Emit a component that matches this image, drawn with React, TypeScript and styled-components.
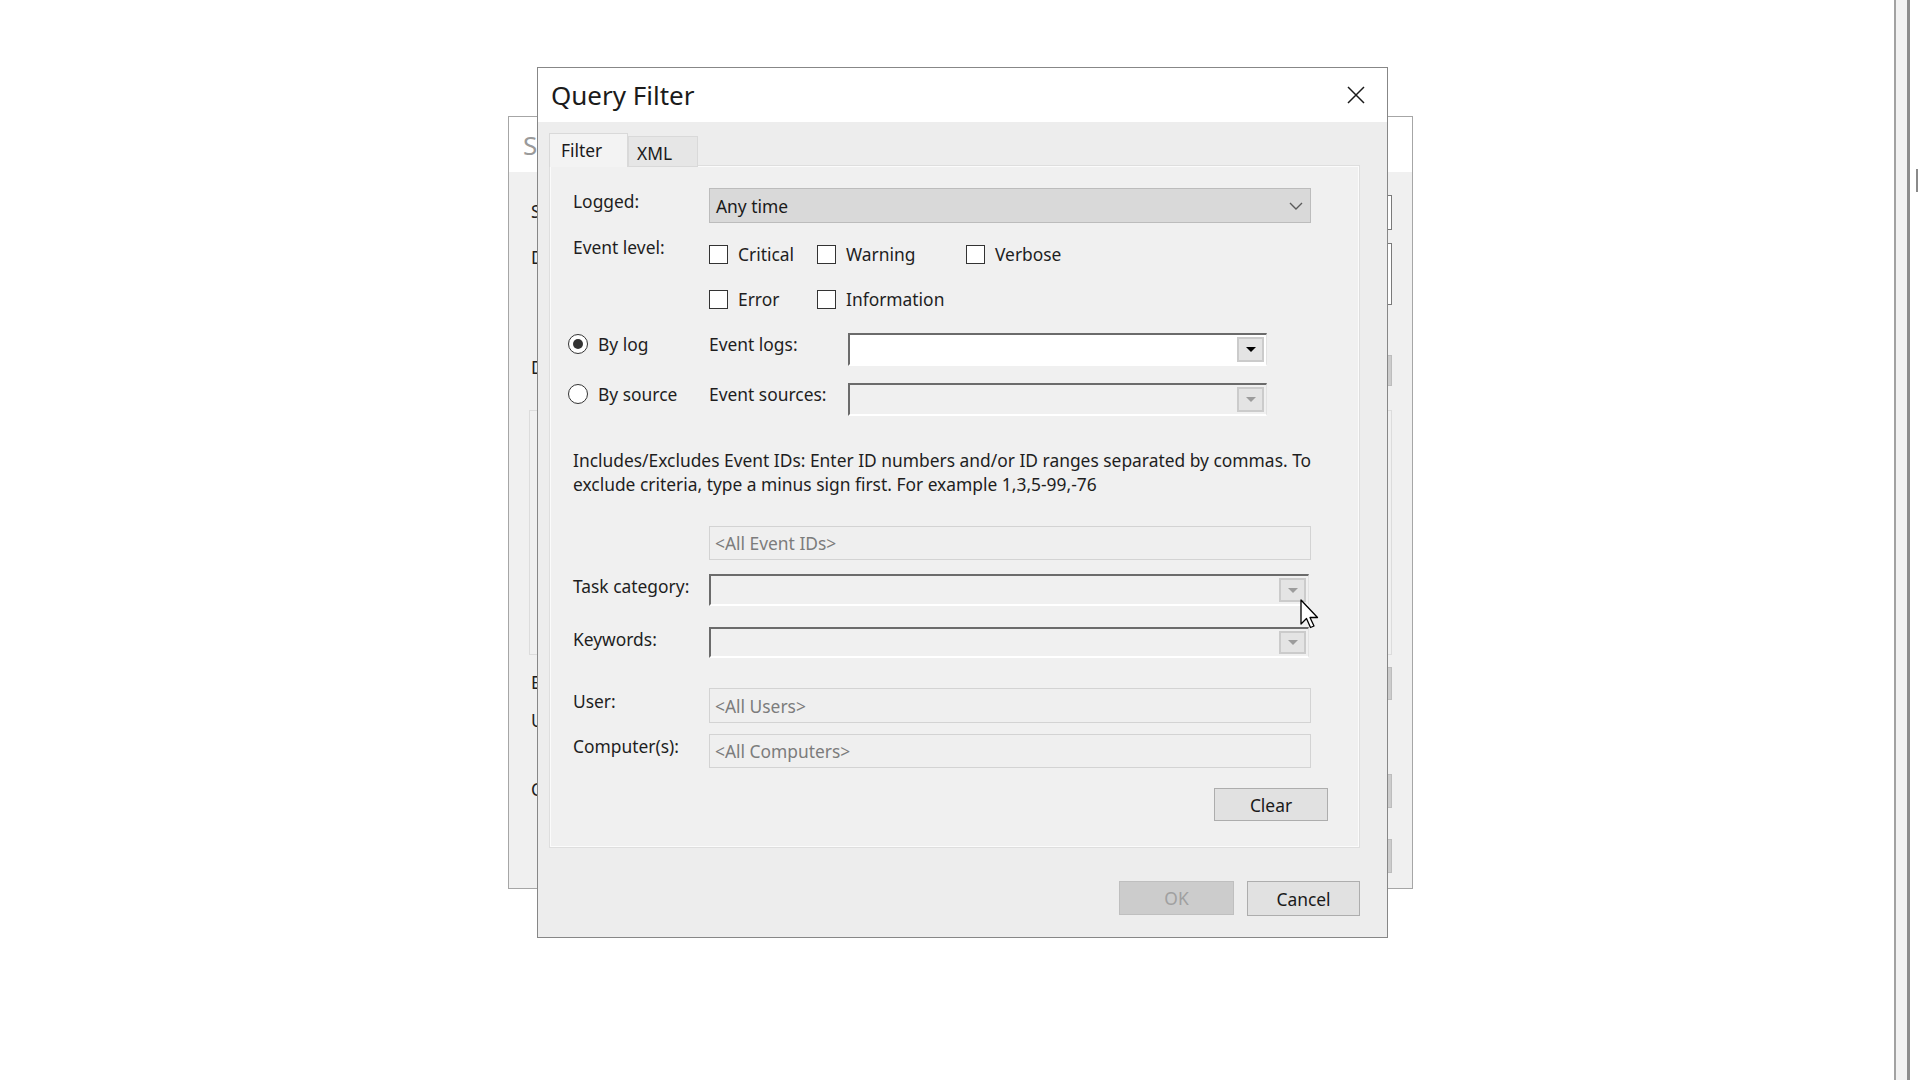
import React from "react";
import styled, { createGlobalStyle } from "styled-components";

const Global = createGlobalStyle`
  html, body { margin: 0; padding: 0; background: #ffffff; }
  body { font-family: "Noto Sans", "Open Sans", sans-serif; }
`;

const Desktop = styled.div`
  position: relative;
  width: 1920px;
  height: 1080px;
  overflow: hidden;
  background: #ffffff;
  font-family: "Noto Sans", "Open Sans", sans-serif;
  font-size: 17.4px;
  line-height: 24px;
  color: #202020;
`;

/* ---------- background window (partly hidden) ---------- */
const BackWindow = styled.div`
  position: absolute;
  left: 508px;
  top: 116px;
  width: 905px;
  height: 773px;
  box-sizing: border-box;
  border: 1px solid #a6a6a6;
  background: #f0f0f0;
  display: flex;
  flex-direction: column;
`;

const BackTitle = styled.div`
  height: 55px;
  background: #ffffff;
  display: flex;
  align-items: center;
  padding-left: 14px;
  font-size: 26px;
  color: #9a9a9a;
`;

const BackBody = styled.div`
  display: flex;
  flex-direction: column;
  padding: 0 20px 0 22px;
`;

const BackRow = styled.div<{ $mt: number; $h: number }>`
  display: flex;
  justify-content: space-between;
  align-items: flex-start;
  margin-top: ${(p) => p.$mt}px;
  height: ${(p) => p.$h}px;
`;

const BackLabel = styled.span<{ $pt?: number }>`
  padding-top: ${(p) => p.$pt ?? 0}px;
  color: #202020;
`;

const BackField = styled.div<{ $kind: "outline" | "gray"; $h: number }>`
  width: 600px;
  height: ${(p) => p.$h}px;
  box-sizing: border-box;
  border: 1px solid ${(p) => (p.$kind === "outline" ? "#7a7a7a" : "#bdbdbd")};
  background: ${(p) => (p.$kind === "outline" ? "#ffffff" : "#cccccc")};
`;

const BackGroup = styled.div`
  margin: 24px 0 0 -2px;
  height: 245px;
  box-sizing: border-box;
  border: 1px solid #dcdcdc;
`;

/* ---------- right screen edge ---------- */
const EdgeWindow = styled.div`
  position: absolute;
  left: 1894px;
  top: 0;
  width: 16px;
  height: 1080px;
  box-sizing: border-box;
  border-left: 2px solid #a2a2a2;
  border-right: 3px solid #8d8d8d;
  background: #f2f2f2;
`;

const EdgeTick = styled.div`
  position: absolute;
  left: 1916px;
  top: 169px;
  width: 2px;
  height: 23px;
  background: #8a8a8a;
`;

/* ---------- dialog ---------- */
const Dialog = styled.div`
  position: absolute;
  left: 537px;
  top: 67px;
  width: 851px;
  height: 871px;
  box-sizing: border-box;
  border: 1px solid #878787;
  background: #ededed;
  display: flex;
  flex-direction: column;
`;

const TitleBar = styled.div`
  height: 54px;
  flex: none;
  background: #ffffff;
  display: flex;
  align-items: center;
  justify-content: space-between;
  padding-left: 13px;
`;

const TitleText = styled.span`
  font-size: 26px;
  line-height: 34px;
  color: #1b1b1b;
`;

const CloseBtn = styled.div`
  width: 62px;
  height: 54px;
  display: flex;
  align-items: center;
  justify-content: center;
`;

const TabStrip = styled.div`
  display: flex;
  align-items: flex-end;
  margin-top: 12px;
  padding-left: 11px;
  height: 33px;
  flex: none;
  position: relative;
  z-index: 1;
  margin-bottom: -1px;
`;

const Tab = styled.div<{ $active?: boolean; $w: number }>`
  width: ${(p) => p.$w}px;
  height: ${(p) => (p.$active ? 34 : 31)}px;
  box-sizing: border-box;
  border: 1px solid #d9d9d9;
  border-bottom: ${(p) => (p.$active ? "none" : "1px solid #d9d9d9")};
  background: ${(p) => (p.$active ? "#f3f3f3" : "#e6e6e6")};
  padding: ${(p) => (p.$active ? "4px 0 0 11px" : "4px 0 0 8px")};
  color: #1a1a1a;
`;

const Panel = styled.div`
  margin: 0 28px 0 12px;
  box-sizing: border-box;
  border: 1px solid #fbfbfb;
  box-shadow: 0 0 0 1px #dedede;
  background: #f0f0f0;
  padding: 21px 30px 25px 22px;
  display: flex;
  flex-direction: column;
`;

const Row = styled.div<{ $mt: number }>`
  display: flex;
  align-items: flex-start;
  margin-top: ${(p) => p.$mt}px;
`;

const Label = styled.span<{ $pt?: number }>`
  width: 136px;
  flex: none;
  padding-top: ${(p) => p.$pt ?? 0}px;
  color: #1e1e1e;
`;

const SelectBox = styled.div`
  width: 602px;
  height: 35px;
  box-sizing: border-box;
  border: 1px solid #bcbcbc;
  background: #d9d9d9;
  display: flex;
  align-items: center;
  justify-content: space-between;
  padding: 1px 7px 0 6px;
  color: #1a1a1a;
`;

const ChecksGrid = styled.div`
  display: grid;
  grid-template-columns: 108px 149px auto;
  row-gap: 21px;
  padding-top: 7px;
`;

const CheckItem = styled.label`
  display: flex;
  align-items: center;
  gap: 10px;
  height: 24px;
  color: #1e1e1e;
`;

const CheckBox = styled.span`
  width: 19px;
  height: 19px;
  box-sizing: border-box;
  border: 1px solid #333333;
  background: #ffffff;
  flex: none;
`;

const RadioItem = styled.label`
  width: 141px;
  margin-left: -5px;
  flex: none;
  display: flex;
  align-items: center;
  gap: 10px;
  height: 24px;
  color: #1e1e1e;
`;

const RadioCircle = styled.span<{ $on?: boolean }>`
  width: 20px;
  height: 20px;
  box-sizing: border-box;
  border-radius: 50%;
  border: 1px solid #333333;
  background: #ffffff;
  flex: none;
  display: flex;
  align-items: center;
  justify-content: center;
  &::after {
    content: "";
    width: 10px;
    height: 10px;
    border-radius: 50%;
    background: ${(p) => (p.$on ? "#333333" : "transparent")};
  }
`;

const SubLabel = styled.span`
  width: 139px;
  flex: none;
  color: #1e1e1e;
`;

const Combo = styled.div<{ $w: number; $h: number; $disabled?: boolean; $mt?: number }>`
  width: ${(p) => p.$w}px;
  height: ${(p) => p.$h}px;
  margin-top: ${(p) => p.$mt ?? 0}px;
  box-sizing: border-box;
  border-style: solid;
  border-width: 2px 1px 2px 2px;
  border-color: #6b6b6b #e2e2e2 #ffffff #6b6b6b;
  background: ${(p) => (p.$disabled ? "#f0f0f0" : "#ffffff")};
  padding: 2px 2px 2px 0;
  display: flex;
  justify-content: flex-end;
`;

const DropBtn = styled.div<{ $disabled?: boolean }>`
  width: 27px;
  height: 100%;
  box-sizing: border-box;
  border: 2px solid #cbcbcb;
  background: #e4e4e4;
  display: flex;
  align-items: center;
  justify-content: center;
  &::after {
    content: "";
    border-left: 5px solid transparent;
    border-right: 5px solid transparent;
    border-top: 5px solid ${(p) => (p.$disabled ? "#9c9c9c" : "#000000")};
  }
`;

const Description = styled.p`
  margin: 32px 0 0 0;
  color: #1e1e1e;
  white-space: nowrap;
`;

const TextField = styled.div<{ $h: number; $indent?: boolean; $mt?: number }>`
  width: 602px;
  height: ${(p) => p.$h}px;
  margin-left: ${(p) => (p.$indent ? 136 : 0)}px;
  margin-top: ${(p) => p.$mt ?? 0}px;
  box-sizing: border-box;
  border: 1px solid #d3d3d3;
  background: #efefef;
  display: flex;
  align-items: center;
  padding-left: 5px;
  color: #7c7c7c;
`;

const ButtonRow = styled.div<{ $mt: number }>`
  display: flex;
  justify-content: flex-end;
  gap: 13px;
  margin-top: ${(p) => p.$mt}px;
`;

const Button = styled.div<{ $w: number; $h: number; $disabled?: boolean }>`
  width: ${(p) => p.$w}px;
  height: ${(p) => p.$h}px;
  box-sizing: border-box;
  border: 1px solid ${(p) => (p.$disabled ? "#bfbfbf" : "#adadad")};
  background: ${(p) => (p.$disabled ? "#cccccc" : "#e1e1e1")};
  color: ${(p) => (p.$disabled ? "#a0a0a0" : "#1a1a1a")};
  display: flex;
  align-items: center;
  justify-content: center;
`;

const Footer = styled.div`
  display: flex;
  justify-content: flex-end;
  gap: 13px;
  margin-top: 34px;
  padding-right: 27px;
  align-items: flex-start;
`;

const Cursor = styled.svg`
  position: absolute;
  left: 1300px;
  top: 599px;
`;

export default function App() {
  return (
    <>
      <Global />
      <Desktop>
        <BackWindow>
          <BackTitle>S</BackTitle>
          <BackBody>
            <BackRow $mt={23} $h={35}>
              <BackLabel $pt={4}>S</BackLabel>
              <BackField $kind="outline" $h={35} />
            </BackRow>
            <BackRow $mt={13} $h={62}>
              <BackLabel $pt={2}>D</BackLabel>
              <BackField $kind="outline" $h={62} />
            </BackRow>
            <BackRow $mt={50} $h={31}>
              <BackLabel>D</BackLabel>
              <BackField $kind="gray" $h={31} />
            </BackRow>
            <BackGroup />
            <BackRow $mt={12} $h={33}>
              <BackLabel $pt={3}>E</BackLabel>
              <BackField $kind="gray" $h={33} />
            </BackRow>
            <BackRow $mt={8} $h={24}>
              <BackLabel>U</BackLabel>
            </BackRow>
            <BackRow $mt={42} $h={34}>
              <BackLabel $pt={3}>C</BackLabel>
              <BackField $kind="gray" $h={34} />
            </BackRow>
            <BackRow $mt={31} $h={34}>
              <span />
              <BackField $kind="gray" $h={34} />
            </BackRow>
          </BackBody>
        </BackWindow>

        <EdgeWindow />
        <EdgeTick />

        <Dialog>
          <TitleBar>
            <TitleText>Query Filter</TitleText>
            <CloseBtn>
              <svg width="18" height="18" viewBox="0 0 18 18">
                <path d="M1 1 L17 17 M17 1 L1 17" stroke="#1a1a1a" strokeWidth="1.5" fill="none" />
              </svg>
            </CloseBtn>
          </TitleBar>

          <TabStrip>
            <Tab $active $w={79}>Filter</Tab>
            <Tab $w={70}>XML</Tab>
          </TabStrip>

          <Panel>
            <Row $mt={0}>
              <Label $pt={1}>Logged:</Label>
              <SelectBox>
                <span>Any time</span>
                <svg width="14" height="8" viewBox="0 0 14 8">
                  <path d="M1 1 L7 7 L13 1" stroke="#5a5a5a" strokeWidth="1.4" fill="none" />
                </svg>
              </SelectBox>
            </Row>

            <Row $mt={12}>
              <Label>Event level:</Label>
              <ChecksGrid>
                <CheckItem><CheckBox />Critical</CheckItem>
                <CheckItem><CheckBox />Warning</CheckItem>
                <CheckItem><CheckBox />Verbose</CheckItem>
                <CheckItem><CheckBox />Error</CheckItem>
                <CheckItem><CheckBox />Information</CheckItem>
              </ChecksGrid>
            </Row>

            <Row $mt={21}>
              <RadioItem><RadioCircle $on />By log</RadioItem>
              <SubLabel>Event logs:</SubLabel>
              <Combo $w={419} $h={33} $mt={1}>
                <DropBtn />
              </Combo>
            </Row>

            <Row $mt={16}>
              <RadioItem><RadioCircle />By source</RadioItem>
              <SubLabel>Event sources:</SubLabel>
              <Combo $w={419} $h={33} $mt={1} $disabled>
                <DropBtn $disabled />
              </Combo>
            </Row>

            <Description>
              Includes/Excludes Event IDs: Enter ID numbers and/or ID ranges separated by commas. To
              <br />
              exclude criteria, type a minus sign first. For example 1,3,5-99,-76
            </Description>

            <TextField $h={34} $indent $mt={30}>&lt;All Event IDs&gt;</TextField>

            <Row $mt={14}>
              <Label>Task category:</Label>
              <Combo $w={600} $h={32} $disabled>
                <DropBtn $disabled />
              </Combo>
            </Row>

            <Row $mt={21}>
              <Label>Keywords:</Label>
              <Combo $w={600} $h={31} $disabled>
                <DropBtn $disabled />
              </Combo>
            </Row>

            <Row $mt={30}>
              <Label $pt={1}>User:</Label>
              <TextField $h={35}>&lt;All Users&gt;</TextField>
            </Row>

            <Row $mt={11}>
              <Label>Computer(s):</Label>
              <TextField $h={34}>&lt;All Computers&gt;</TextField>
            </Row>

            <ButtonRow $mt={20}>
              <Button $w={114} $h={33}>Clear</Button>
            </ButtonRow>
          </Panel>

          <Footer>
            <Button $w={115} $h={34} $disabled>OK</Button>
            <Button $w={113} $h={35}>Cancel</Button>
          </Footer>
        </Dialog>

        <Cursor width="22" height="33" viewBox="0 0 22 33">
          <path
            d="M1 1 L1 25 L6.5 19.5 L10.5 28.5 L14 27 L10 18.5 L17.5 18.5 Z"
            fill="#ffffff"
            stroke="#000000"
            strokeWidth="1.3"
            strokeLinejoin="round"
          />
        </Cursor>
      </Desktop>
    </>
  );
}
